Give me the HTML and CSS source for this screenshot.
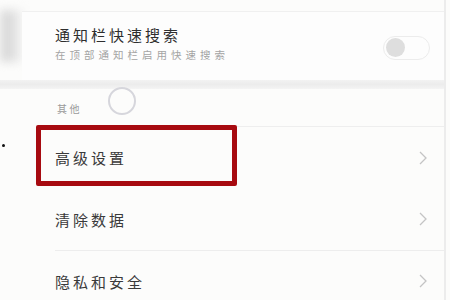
FILE: index.html
```html
<!DOCTYPE html>
<html lang="zh">
<head>
<meta charset="utf-8">
<link rel="stylesheet" href="styles.css">
</head>
<body>
<div class="page">
  <div class="shade"></div>
  <div class="card">
    <div class="switch-row">
      <div class="texts">
        <div class="title">通知栏快速搜索</div>
        <div class="sub">在顶部通知栏启用快速搜索</div>
      </div>
      <div class="toggle"><span class="knob"></span></div>
    </div>
  </div>
  <div class="band"></div>
  <div class="section">其他</div>
  <div class="list">
    <div class="row first"><span class="label">高级设置</span><svg class="chev" viewBox="0 0 10 16" width="10" height="16"><path d="M2 2 L8 8 L2 14" fill="none" stroke="#c4c4c4" stroke-width="1.3"/></svg></div>
    <div class="row"><span class="label">清除数据</span><svg class="chev" viewBox="0 0 10 16" width="10" height="16"><path d="M2 2 L8 8 L2 14" fill="none" stroke="#c4c4c4" stroke-width="1.3"/></svg></div>
    <div class="row sep"><span class="label">隐私和安全</span><svg class="chev" viewBox="0 0 10 16" width="10" height="16"><path d="M2 2 L8 8 L2 14" fill="none" stroke="#c4c4c4" stroke-width="1.3"/></svg></div>
  </div>
  <div class="spinner"></div>
  <div class="highlight"></div>
  <div class="dot"></div>
</div>
</body>
</html>
```
FILE: styles.css
```css
html, body {
  margin: 0;
  padding: 0;
  background: #fcfcfb;
}
body {
  font-family: "Noto Sans CJK SC", "Noto Sans", sans-serif;
  width: 450px;
  height: 300px;
  overflow: hidden;
}
.page {
  position: relative;
  width: 444px;
  height: 300px;
  border-right: 2px solid #ececec;
  background: #fcfcfb;
  display: flex;
  flex-direction: column;
  overflow: hidden;
}
.page > * {
  flex-shrink: 0;
}
.shade {
  position: absolute;
  left: 0;
  top: 10px;
  width: 22px;
  height: 52px;
  background: linear-gradient(90deg, #d8d8d8 0%, #dcdcdc 50%, #f2f2f2 100%);
  filter: blur(5px);
}
.card {
  position: relative;
  margin-left: 22px;
  margin-top: 11px;
  border-top: 1px solid #f0f0f0;
  background: #fdfdfd;
  height: 68px;
}
.switch-row {
  display: flex;
  align-items: center;
  justify-content: space-between;
  padding: 13px 14px 0 33px;
}
.title {
  font-size: 15px;
  line-height: 20px;
  letter-spacing: 3px;
  color: #2e2e2e;
}
.sub {
  font-size: 10.5px;
  line-height: 14px;
  margin-top: 3px;
  letter-spacing: 4px;
  color: #a4a4a4;
}
.toggle {
  width: 43px;
  height: 22px;
  border: 1.5px solid #ececec;
  border-radius: 12px;
  display: flex;
  align-items: center;
  padding-left: 2px;
  margin-top: 8px;
}
.knob {
  width: 19px;
  height: 19px;
  border-radius: 50%;
  background: #dedede;
}
.band {
  height: 9px;
  background: linear-gradient(180deg, #f2f2f2, #ececec 50%, #f4f4f4);
}
.section {
  height: 37px;
  padding-left: 57px;
  font-size: 10px;
  line-height: 12px;
  letter-spacing: 2.5px;
  color: #9a9a9a;
  display: flex;
  align-items: center;
  padding-top: 2px;
  box-sizing: border-box;
}
.list {
  display: flex;
  flex-direction: column;
}
.row {
  height: 62px;
  flex-shrink: 0;
  display: flex;
  align-items: center;
  justify-content: space-between;
  padding: 0 16px 0 55px;
  position: relative;
  box-sizing: border-box;
}
.row.first {
  border-top: 1px solid #eeeeee;
  margin-left: 37px;
  padding-left: 18px;
}
.row.sep::before {
  content: "";
  position: absolute;
  left: 55px;
  right: 0;
  top: 0;
  border-top: 1px solid #ededed;
}
.label {
  font-size: 15px;
  letter-spacing: 3px;
  color: #3a3a3a;
}
.chev {
  display: block;
}
.spinner {
  position: absolute;
  left: 108px;
  top: 87px;
  width: 24px;
  height: 24px;
  border: 2px solid #d6d6dc;
  border-radius: 50%;
}
.highlight {
  position: absolute;
  left: 36px;
  top: 125px;
  width: 191px;
  height: 51px;
  border: 5px solid #a70a10;
  border-radius: 2px;
}
.dot {
  position: absolute;
  left: 2px;
  top: 144px;
  width: 3px;
  height: 3px;
  border-radius: 50%;
  background: #111;
}
```
